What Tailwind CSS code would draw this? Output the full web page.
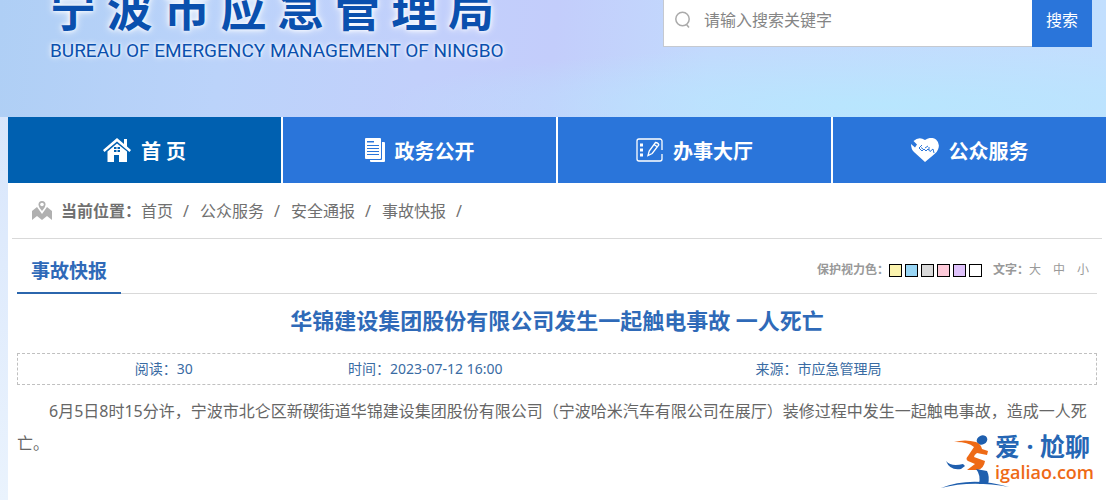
<!DOCTYPE html>
<html lang="zh-CN">
<head>
    <meta charset="UTF-8">
    <title>宁波市应急管理局</title>
    <meta name="viewport" content="width=device-width, initial-scale=1.0">
    <script src="https://cdn.jsdelivr.net/npm/@tailwindcss/browser@4"></script>
</head>
<body class="min-h-screen flex flex-col bg-gradient-to-b from-[#d3e2fb] to-[#eaf3fd] font-['Noto_Sans','Noto_Sans_CJK_SC',sans-serif] text-[#666]">

<header class="h-[117px] overflow-hidden flex items-end justify-between pl-[50px] pr-[14px] bg-[radial-gradient(ellipse_at_80%_90%,#b8e6fe_0%,transparent_40%),linear-gradient(95deg,#afcff5_0%,#bbd3fa_20%,#c2d0fb_38%,#c3cdfb_50%,#c2dafd_64%,#c2dffe_100%)]">
    <div class="flex flex-col w-[444px] pb-[54px] text-[#0a50ae]">
        <h1 class="mb-[6px] text-[46px] leading-[50px] font-bold [text-align-last:justify] [text-shadow:0_0_4px_#fff,0_0_8px_#fff]">宁波市应急管理局</h1>
        <p class="text-[19px] leading-6 whitespace-nowrap font-['Roboto',sans-serif] [text-shadow:0_0_3px_#fff,0_0_6px_#fff]">BUREAU OF EMERGENCY MANAGEMENT OF NINGBO</p>
    </div>
    <form class="flex w-[429px] h-[54px] mb-[70px]">
        <label for="keyword" class="flex items-center pl-[10px] pt-[1px] bg-white border-l border-b border-[#c5c9d0]">
            <svg class="w-[18px] h-[18px]" viewBox="0 0 18 18" fill="none" stroke="#aaa" stroke-width="1.5">
                <circle cx="8.500" cy="8" r="6.700"/>
                <path d="M12.500 13.500l2.500 3"/>
            </svg>
        </label>
        <input id="keyword" type="text" placeholder="请输入搜索关键字" class="flex-1 min-w-0 pl-3 text-base bg-white border-b border-[#c5c9d0] placeholder:text-[#858585] outline-none">
        <button type="button" class="w-[60px] bg-[#2a75da] text-white text-base">搜索</button>
    </form>
</header>

<main class="flex-1 ml-2 bg-white">
    <nav class="grid grid-cols-4 gap-[2px] text-white text-xl font-bold">
        <a href="#" class="h-[66px] flex items-center justify-center gap-[10px] bg-[#0060b0]">
            <svg class="w-7 h-6" viewBox="0 0 28 24" fill="#fff">
                <path d="M14 0L0 12l1.500 2L14 3.500 26.500 14l1.500-2-4-3.500V1h-3v5z"/>
                <path fill-rule="evenodd" d="M14 5.500L4.500 13.500V24H11v-7h5v7h8V13.500zM11 9h2.500v2H11zM14.500 9H17v2h-2.500zM11 12h2.500v2H11zM14.500 12H17v2h-2.500z"/>
            </svg>
            <span class="pt-1">首 页</span>
        </a>
        <a href="#" class="h-[66px] flex items-center justify-center gap-[10px] bg-[#2a75da]">
            <svg class="w-5 h-6" viewBox="0 0 20 24" fill="#fff">
                <path fill-rule="evenodd" d="M1 0h14a1 1 0 011 1v19a1 1 0 01-1 1H1a1 1 0 01-1-1V1a1 1 0 011-1zM2 3v1.500h7V3zM2 7v1h12V7zM2 10v1h12v-1zM2 13v1h12v-1zM2 16v1h12v-1z"/>
                <path d="M17 4h2a1 1 0 011 1v18a1 1 0 01-1 1H6a1 1 0 01-1-1v-1h11a1 1 0 001-1z"/>
            </svg>
            <span class="pt-1">政务公开</span>
        </a>
        <a href="#" class="h-[66px] flex items-center justify-center gap-[10px] bg-[#2a75da]">
            <svg class="w-[27px] h-6" viewBox="0 0 27 24" fill="none" stroke="#fff" stroke-width="1.300">
                <path d="M26 12V3a2 2 0 00-2-2H3a2 2 0 00-2 2v18a2 2 0 002 2h21a2 2 0 002-2v-5"/>
                <path stroke-width="3" d="M4 7h3M4 12h3M4 17h3"/>
                <path d="M12 17.500l1.200-4.500L19.500 4.500q2.500 0 3.300 2.300L16.200 15.500zM18 6.500l3.200 2.300"/>
            </svg>
            <span class="pt-1">办事大厅</span>
        </a>
        <a href="#" class="h-[66px] flex items-center justify-center gap-[10px] bg-[#2a75da]">
            <svg class="w-7 h-6" viewBox="0 0 28 24">
                <path fill="#fff" d="M14 24L3 14Q0 11 0 6l4 3.500L6 6.500 2.500 3Q8-2 14 2q6-4 11-.5 4.500 4 2 10-1 3-4 5z"/>
                <path fill="none" stroke="#2a75da" d="M11 7l-3 3 3 3 2-2 2 2 2-2 2 2.500 3-2.500 1 4M14 10l3-2M10 9.500l2 1.500M18 9v3"/>
            </svg>
            <span class="pt-1">公众服务</span>
        </a>
    </nav>

    <div class="mx-1 h-14 flex items-center pl-5 border-b border-[#d9d9d9] text-base text-[#707070]">
        <svg class="w-5 h-5 mr-[9px]" viewBox="0 0 20 20">
            <path fill="#b0b0b0" d="M0 10l5-4 5 7 5-7 5 4v9l-5-4-5 4-5-4-5 4z"/>
            <path fill="#b0b0b0" d="M10 10Q6.500 6 6.500 3.500a3.500 3.500 0 017 0Q13.500 6 10 10z"/>
            <circle cx="10" cy="3.500" r="1.800" fill="#fff"/>
        </svg>
        <strong>当前位置：</strong>
        <div class="flex gap-[10px]">
            <a href="#">首页</a><span class="w-[7px]">/</span>
            <a href="#">公众服务</a><span class="w-[7px]">/</span>
            <a href="#">安全通报</a><span class="w-[7px]">/</span>
            <a href="#">事故快报</a><span class="w-[7px]">/</span>
        </div>
    </div>

    <article class="mx-[9px]">
        <div class="h-[55px] flex justify-between border-b border-[#d9d9d9]">
            <h2 class="h-[55px] flex items-center px-[14px] pt-3 border-b-2 border-[#2b66ad] text-[19px] font-bold text-[#2f6ab8]">事故快报</h2>
            <div class="flex items-center pt-2 pr-2 text-xs text-[#999]">
                <strong>保护视力色：</strong>
                <div class="flex gap-[3px] mr-[11px]">
                    <button type="button" aria-label="黄色" class="w-[13px] h-[13px] border border-black bg-[#fbf3ae]"></button>
                    <button type="button" aria-label="蓝色" class="w-[13px] h-[13px] border border-black bg-[#99d6f5]"></button>
                    <button type="button" aria-label="灰色" class="w-[13px] h-[13px] border border-black bg-[#d9d9d9]"></button>
                    <button type="button" aria-label="粉色" class="w-[13px] h-[13px] border border-black bg-[#fdcad9]"></button>
                    <button type="button" aria-label="紫色" class="w-[13px] h-[13px] border border-black bg-[#dfc2fb]"></button>
                    <button type="button" aria-label="白色" class="w-[13px] h-[13px] border border-black bg-white"></button>
                </div>
                <strong>文字：</strong>
                <div class="flex gap-3">
                    <button type="button">大</button>
                    <button type="button">中</button>
                    <button type="button">小</button>
                </div>
            </div>
        </div>

        <h3 class="pt-2 pb-[15px] text-center text-[22px] leading-9 font-bold text-[#2f6ab8]">华锦建设集团股份有限公司发生一起触电事故 一人死亡</h3>

        <div class="grid grid-cols-[292fr_232fr_556fr] items-center h-8 border border-dashed border-[#c0c0c0] text-center text-sm text-[#396ba3]">
            <span>阅读：30</span>
            <span>时间：2023-07-12 16:00</span>
            <span>来源：市应急管理局</span>
        </div>

        <p class="pt-[10px] indent-8 text-base leading-8">6月5日8时15分许，宁波市北仑区新碶街道华锦建设集团股份有限公司（宁波哈米汽车有限公司在展厅）装修过程中发生一起触电事故，造成一人死亡。</p>
    </article>
</main>

<a href="#" class="absolute right-3 bottom-3 flex items-end">
    <svg class="w-[54px] h-[54px] overflow-visible" viewBox="0 0 54 54">
        <ellipse cx="41" cy="6" rx="5.500" ry="4.500" transform="rotate(-25 41 6)" fill="#1f5fae"/>
        <path fill="#ee6a16" d="M13 8Q24 5 35 8q5 2 6 7l6 2-1 4-10-2q-3 2-3 4l11 4q-1 7-7 9h-11l8-6-7-3q-3-2 0-5l6-9q-6-5-18-5z"/>
        <path fill="#1f5fae" d="M5 27q5 6 17 3l2 2-4 3Q9 37 5 27zM35 35l11 2q3 6 1 13h-9q2-9-3-15z"/>
        <path fill="#1f5fae" d="M0 54Q30 42 68 53 30 46 0 54z"/>
    </svg>
    <span class="flex flex-col pb-1">
        <span class="text-[25px] leading-7 font-bold text-[#2566b4]">爱 · 尬聊</span>
        <span class="text-lg leading-6 font-semibold text-[#ee6a16] font-['Open_Sans',sans-serif]">igaliao.com</span>
    </span>
</a>

</body>
</html>
